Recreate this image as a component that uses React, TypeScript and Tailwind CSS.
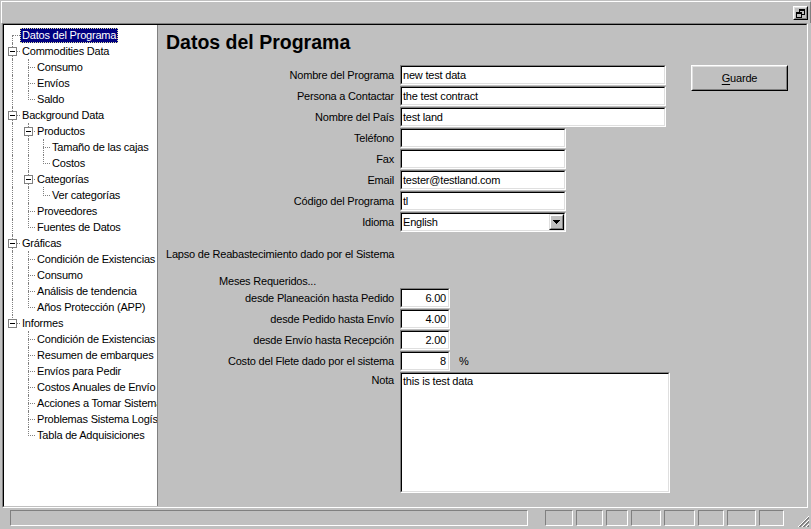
import React from "react";

type TreeNode = { label: string; children?: TreeNode[] };

const TREE: TreeNode[] = [
  { label: "Datos del Programa" },
  {
    label: "Commodities Data",
    children: [{ label: "Consumo" }, { label: "Envíos" }, { label: "Saldo" }],
  },
  {
    label: "Background Data",
    children: [
      { label: "Productos", children: [{ label: "Tamaño de las cajas" }, { label: "Costos" }] },
      { label: "Categorías", children: [{ label: "Ver categorías" }] },
      { label: "Proveedores" },
      { label: "Fuentes de Datos" },
    ],
  },
  {
    label: "Gráficas",
    children: [
      { label: "Condición de Existencias" },
      { label: "Consumo" },
      { label: "Análisis de tendencia" },
      { label: "Años Protección (APP)" },
    ],
  },
  {
    label: "Informes",
    children: [
      { label: "Condición de Existencias" },
      { label: "Resumen de embarques" },
      { label: "Envíos para Pedir" },
      { label: "Costos Anuales de Envío" },
      { label: "Acciones a Tomar Sistema" },
      { label: "Problemas Sistema Logístico" },
      { label: "Tabla de Adquisiciones" },
    ],
  },
];

type Row = {
  label: string;
  level: number;
  hasNext: boolean;
  hasKids: boolean;
  first: boolean;
  ancestorNext: boolean[];
};

function flatten(nodes: TreeNode[], level: number, ancestorNext: boolean[], out: Row[]) {
  nodes.forEach((n, i) => {
    const hasNext = i < nodes.length - 1;
    out.push({
      label: n.label,
      level,
      hasNext,
      hasKids: !!n.children?.length,
      first: level === 0 && i === 0,
      ancestorNext,
    });
    if (n.children) flatten(n.children, level + 1, [...ancestorNext, hasNext], out);
  });
  return out;
}

const ROWS = flatten(TREE, 0, [], []);
// offsets are relative to the tree pane, which starts at x=4
const lineX = (l: number) => 8 + Math.round(l * 15.5);
const textX = (l: number) => 18 + l * 15;

function TreeRow({ row, selected }: { row: Row; selected: boolean }) {
  const x = lineX(row.level);
  return (
    <div className="relative h-[16px]">
      {row.ancestorNext.map((next, k) =>
        next ? (
          <span
            key={k}
            className="absolute top-0 h-[16px] border-l border-dotted border-[#808080]"
            style={{ left: lineX(k) }}
          />
        ) : null
      )}
      <span
        className="absolute border-l border-dotted border-[#808080]"
        style={{ left: x, top: row.first ? 8 : 0, height: row.hasNext ? (row.first ? 8 : 16) : 9 }}
      />
      <span
        className="absolute top-[8px] border-t border-dotted border-[#808080]"
        style={{ left: x, width: textX(row.level) - 2 - x }}
      />
      {row.hasKids && (
        <span
          className="absolute top-[4px] w-[9px] h-[9px] border border-[#808080] bg-white"
          style={{ left: x - 4 }}
        >
          <span className="absolute left-[1px] top-[3px] w-[5px] h-[1px] bg-black" />
        </span>
      )}
      <span
        className={`absolute top-[1px] h-[15px] px-[2px] leading-[15px] whitespace-nowrap ${
          selected
            ? "bg-[#000080] text-white outline-1 outline-dotted outline-[#e0e0a0] -outline-offset-1"
            : "text-black"
        }`}
        style={{ left: textX(row.level) - 2 }}
      >
        {row.label}
      </span>
    </div>
  );
}

function Sunken({ className = "", children }: { className?: string; children?: React.ReactNode }) {
  return (
    <div className={`border border-t-[#808080] border-l-[#808080] border-b-white border-r-white ${className}`}>
      <div className="h-full border border-t-black border-l-black border-b-[#dfdfdf] border-r-[#dfdfdf] bg-white overflow-hidden">
        {children}
      </div>
    </div>
  );
}

function Label({ children }: { children: React.ReactNode }) {
  return <div className="text-right leading-[20px] h-[20px] whitespace-nowrap">{children}</div>;
}

function TextBox({ w, value, right }: { w: string; value: string; right?: boolean }) {
  return (
    <Sunken className={`${w} h-[20px]`}>
      <div className={`leading-[16px] whitespace-nowrap ${right ? "text-right pr-[2px]" : "pl-[1px]"}`}>{value}</div>
    </Sunken>
  );
}

export default function App() {
  return (
    <div className="w-[811px] h-[529px] bg-[#c0c0c0] flex flex-col overflow-hidden text-[11px] tracking-[-0.2px] text-black font-['Liberation_Sans',Arial,sans-serif]">
      {/* menu strip with restore button */}
      <div className="h-[23px] pt-[1px] pl-[1px]">
        <div className="h-full border-t border-l border-white border-r border-r-[#808080] flex justify-end items-start pt-[4px] pr-[2px]">
          <div className="w-[15px] h-[14px] border border-t-white border-l-white border-b-black border-r-black">
            <div className="h-full border border-t-[#dfdfdf] border-l-[#dfdfdf] border-b-[#808080] border-r-[#808080] flex items-center justify-center">
              <svg width="9" height="9" viewBox="0 0 9 9" shapeRendering="crispEdges">
                <path d="M3 0h6v2H3z M3 0h1v3H3z M8 0h1v6H8z M6 5h3v1H6z" fill="#000" />
                <path d="M0 3h6v2H0z M0 3h1v6H0z M5 3h1v6H5z M0 8h6v1H0z" fill="#000" />
              </svg>
            </div>
          </div>
        </div>
      </div>

      {/* sunken client frame */}
      <div className="ml-[2px] w-[806px] h-[485px] border border-t-[#808080] border-l-[#808080] border-b-white border-r-white">
        <div className="h-full border border-t-black border-l-black border-b-[#c0c0c0] border-r-[#c0c0c0] flex">
          <div className="w-[154px] h-full bg-white border-r border-[#808080] pt-[2px] overflow-hidden">
            {ROWS.map((r, i) => (
              <TreeRow key={i} row={r} selected={i === 0} />
            ))}
          </div>

          <div className="flex-1 pl-[8px] pt-[6px]">
            <h1 className="text-[19.5px] leading-[22px] font-bold tracking-normal">Datos del Programa</h1>

            <div className="flex mt-[12px] items-start">
              <div className="grid grid-cols-[228px_266px] gap-x-[6px] gap-y-[1px]">
                <Label>Nombre del Programa</Label>
                <TextBox w="w-[266px]" value="new test data" />
                <Label>Persona a Contactar</Label>
                <TextBox w="w-[266px]" value="the test contract" />
                <Label>Nombre del País</Label>
                <TextBox w="w-[266px]" value="test land" />
                <Label>Teléfono</Label>
                <TextBox w="w-[166px]" value="" />
                <Label>Fax</Label>
                <TextBox w="w-[166px]" value="" />
                <Label>Email</Label>
                <TextBox w="w-[166px]" value="tester@testland.com" />
                <Label>Código del Programa</Label>
                <TextBox w="w-[166px]" value="tl" />
                <Label>Idioma</Label>
                <Sunken className="w-[166px] h-[20px]">
                  <div className="flex h-full">
                    <div className="flex-1 pl-[1px] leading-[16px]">English</div>
                    <div className="w-[15px] h-[16px] border border-t-[#dfdfdf] border-l-[#dfdfdf] border-b-black border-r-black bg-[#c0c0c0]">
                      <div className="h-full border border-t-white border-l-white border-b-[#808080] border-r-[#808080] flex items-center justify-center">
                        <svg width="7" height="4" viewBox="0 0 7 4" shapeRendering="crispEdges">
                          <path d="M0 0h7v1H0z M1 1h5v1H1z M2 2h3v1H2z M3 3h1v1H3z" fill="#000" />
                        </svg>
                      </div>
                    </div>
                  </div>
                </Sunken>
              </div>

              <button className="ml-[25px] w-[97px] h-[26px] border border-t-white border-l-white border-b-black border-r-black bg-[#c0c0c0]">
                <div className="h-full border border-t-[#dfdfdf] border-l-[#dfdfdf] border-b-[#808080] border-r-[#808080] flex items-center justify-center">
                  <span>
                    <span className="underline underline-offset-2">G</span>uarde
                  </span>
                </div>
              </button>
            </div>

            <div className="mt-[16px] leading-[13px]">Lapso de Reabastecimiento dado por el Sistema</div>
            <div className="mt-[14px] leading-[13px] pl-[53px]">Meses Requeridos...</div>

            <div className="grid grid-cols-[228px_auto] gap-x-[6px] gap-y-[1px]">
              <Label>desde Planeación hasta Pedido</Label>
              <TextBox w="w-[50px]" value="6.00" right />
              <Label>desde Pedido hasta Envío</Label>
              <TextBox w="w-[50px]" value="4.00" right />
              <Label>desde Envío hasta Recepción</Label>
              <TextBox w="w-[50px]" value="2.00" right />
              <Label>Costo del Flete dado por el sistema</Label>
              <div className="flex items-center">
                <TextBox w="w-[50px]" value="8" right />
                <span className="ml-[9px]">%</span>
              </div>
              <div className="text-right leading-[13px] pt-[2px]">Nota</div>
              <Sunken className="w-[270px] h-[121px]">
                <div className="pl-[1px] pt-[1px] leading-[13px]">this is test data</div>
              </Sunken>
            </div>
          </div>
        </div>
      </div>

      {/* status bar */}
      <div className="flex-1 flex items-start pt-[2px] pl-[10px] relative">
        <div className="w-[518px] h-[16px] border border-t-[#808080] border-l-[#808080] border-b-white border-r-white" />
        <div className="ml-[17px] flex gap-[3px]">
          <div className="w-[28px] h-[16px] border border-t-[#808080] border-l-[#808080] border-b-white border-r-white" />
          <div className="w-[27px] h-[16px] border border-t-[#808080] border-l-[#808080] border-b-white border-r-white" />
          <div className="w-[22px] h-[16px] border border-t-[#808080] border-l-[#808080] border-b-white border-r-white" />
          <div className="w-[30px] h-[16px] border border-t-[#808080] border-l-[#808080] border-b-white border-r-white" />
          <div className="w-[31px] h-[16px] border border-t-[#808080] border-l-[#808080] border-b-white border-r-white" />
          <div className="w-[26px] h-[16px] border border-t-[#808080] border-l-[#808080] border-b-white border-r-white" />
          <div className="w-[29px] h-[16px] border border-t-[#808080] border-l-[#808080] border-b-white border-r-white" />
          <div className="w-[25px] h-[16px] border border-t-[#808080] border-l-[#808080] border-b-white border-r-white" />
        </div>
        <svg className="absolute right-[1px] bottom-[1px]" width="13" height="13" viewBox="0 0 13 13" shapeRendering="crispEdges">
          <path d="M12 1 L1 12" stroke="#fff" strokeWidth="1" />
          <path d="M12 2 L2 12 M12 3 L3 12" stroke="#808080" strokeWidth="1" />
          <path d="M12 5 L5 12" stroke="#fff" strokeWidth="1" />
          <path d="M12 6 L6 12 M12 7 L7 12" stroke="#808080" strokeWidth="1" />
          <path d="M12 9 L9 12" stroke="#fff" strokeWidth="1" />
          <path d="M12 10 L10 12 M12 11 L11 12" stroke="#808080" strokeWidth="1" />
        </svg>
      </div>
    </div>
  );
}
